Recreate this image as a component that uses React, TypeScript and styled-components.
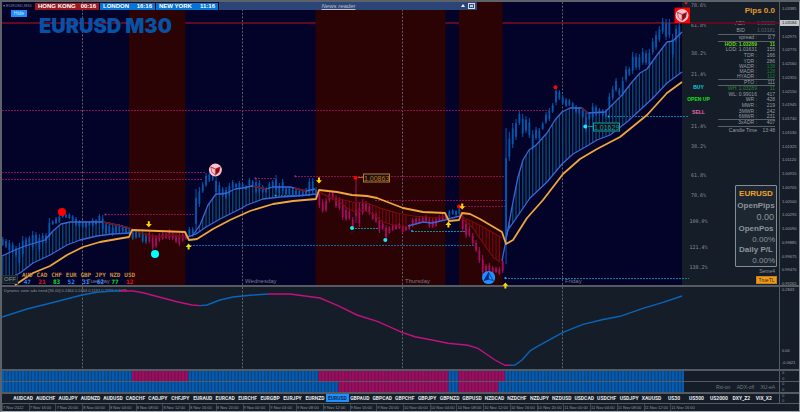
import React from "react";
import styled, { createGlobalStyle } from "styled-components";

const BLUE = "#0559ac";
const MAGENTA = "#a30d62";
const ORANGE = "#f0a63c";
const SANS = '"Liberation Sans", Arial, sans-serif';
const MONO = '"DejaVu Sans Mono", monospace';

const Global = createGlobalStyle`
  * { box-sizing: border-box; }
  body { margin: 0; background: #151e28; font-family: ${SANS}; }
  button { font-family: inherit; cursor: pointer; margin: 0; }
`;

/* ---------- chart data ---------- */

type Pt = [number, number];
const STEP = 10 / 3;
const barX = (i: number) => 2.7 + i * STEP;

/* Monday to the close of Thursday: high and low of each bar */
const early: Pt[] = [
  [237, 246], [239, 248], [240, 252], [242, 253], [246, 257], [243, 266], [236, 257], [237, 248], [236, 246], [231, 250],
  [232, 245], [234, 252], [233, 244], [233, 243], [218, 240], [220, 225], [217, 224], [215, 223], [210, 218], [214, 218],
  [213, 219], [215, 222], [217, 226], [220, 227], [220, 228], [221, 228], [221, 226], [218, 227], [219, 225], [214, 223],
  [215, 232], [222, 235], [223, 234], [225, 236], [225, 233], [224, 233], [225, 232], [226, 233], [227, 235], [230, 240],
  [229, 239], [230, 238], [230, 243], [233, 244], [230, 243], [234, 250], [235, 248], [233, 242], [232, 240], [233, 239],
  [229, 240], [231, 240], [233, 243], [233, 246], [232, 242], [232, 240], [227, 237], [227, 237], [189, 230], [187, 207],
  [182, 193], [173, 187], [172, 182], [171, 181], [177, 195], [182, 195], [187, 197], [187, 199], [183, 197], [180, 190],
  [183, 188], [181, 190], [183, 188], [185, 190], [178, 187], [180, 187], [179, 193], [180, 193], [185, 193], [187, 193],
  [182, 190], [180, 188], [175, 193], [183, 195], [179, 193], [187, 195], [187, 195], [188, 196], [189, 197], [189, 197],
  [190, 197], [188, 195], [178, 195], [178, 193], [187, 198], [190, 208], [199, 213], [198, 212], [192, 202], [190, 200],
  [195, 208], [197, 210], [200, 220], [207, 221], [209, 220], [217, 227], [178, 223], [203, 227], [199, 215], [201, 212],
  [204, 215], [212, 220], [213, 223], [217, 233], [222, 230], [225, 239], [226, 234], [224, 231], [224, 230], [223, 229],
  [225, 233], [226, 231], [224, 230], [218, 227], [217, 225], [217, 224], [216, 223], [215, 222], [217, 228], [218, 228],
  [217, 227], [215, 222], [214, 221], [215, 220], [210, 218], [209, 215], [210, 216], [207, 215], [212, 232], [220, 238],
  [226, 237], [233, 245], [240, 252], [247, 263], [255, 275], [264, 273], [263, 273], [266, 274], [267, 273], [267, 275],
  [258, 273],
];
const late: Pt[] = [
  [128, 264], [132, 161], [123, 148], [119, 140], [111, 125], [114, 137], [116, 133], [118, 138], [130, 150], [127, 140],
  [128, 140], [122, 130], [112, 124], [108, 121], [103, 113], [87, 105], [90, 100], [95, 105], [98, 107], [99, 106],
  [102, 108], [105, 113], [107, 115], [108, 118], [113, 132], [112, 120], [103, 120], [105, 116], [108, 115], [109, 116],
  [109, 118], [93, 109], [86, 100], [78, 92], [88, 96], [77, 96], [66, 82], [67, 76], [52, 74], [53, 70],
  [54, 70], [48, 65], [50, 65], [49, 67], [38, 55], [31, 50], [26, 42], [18, 34], [19, 40], [19, 38],
  [34, 58], [25, 42], [22, 38],
];
const bars: Pt[] = [...early, ...late];
const isDown = (i: number) => (i >= 44 && i < 56) || (i >= 95 && i < 134) || (i >= 138 && i < 151);

const ribbons: { upper: Pt[]; lower: Pt[]; down?: boolean }[] = [
  {
    upper: [[2, 256], [15, 250], [25, 246], [35, 243], [45, 240], [53, 231], [61, 224], [70, 222], [83, 222], [103, 222], [117, 225], [129, 228]],
    lower: [[2, 282], [20, 273], [33, 263], [50, 255], [67, 245], [80, 240], [97, 236], [112, 234], [130, 233]],
  },
  {
    upper: [[188, 237], [193, 235], [200, 225], [208, 205], [216, 194], [221, 194], [227, 193], [235, 189], [243, 188], [252, 186], [266, 189], [273, 187], [290, 187], [306, 191], [315, 189]],
    lower: [[188, 237], [196, 234], [206, 227], [220, 219], [240, 209], [247, 205], [263, 199], [280, 197], [297, 196], [316, 194]],
  },
  {
    upper: [[319, 192], [327, 196], [340, 199], [352, 202], [367, 203], [380, 208], [397, 213], [413, 216], [437, 218], [445, 216]],
    lower: [[319, 192], [330, 198], [340, 202], [347, 208], [355, 212], [363, 210], [373, 214], [383, 222], [393, 225], [407, 227]],
    down: true,
  },
  {
    upper: [[462, 217], [473, 222], [483, 227], [502, 238]],
    lower: [[462, 218], [473, 228], [483, 243], [493, 257], [500, 262]],
    down: true,
  },
  {
    upper: [[502, 261], [506, 240], [512, 207], [518, 177], [523, 160], [529, 150], [535, 146], [538, 143], [547, 133], [555, 120], [562, 112], [570, 108], [582, 108], [588, 113], [605, 112], [612, 105], [622, 95], [632, 82], [640, 73], [647, 69], [657, 55], [667, 42], [673, 41], [682, 32]],
    lower: [[506, 237], [508, 230], [517, 217], [530, 198], [547, 182], [562, 164], [573, 154], [587, 146], [597, 140], [610, 135], [627, 122], [640, 110], [653, 98], [667, 83], [682, 72]],
  },
];
const redBits: Pt[][] = [
  [[103, 222], [117, 225], [130, 228], [143, 234], [157, 237], [173, 235], [185, 237]],
  [[253, 186], [266, 189]],
  [[294, 188], [306, 191]],
  [[582, 108], [588, 113]],
];
const blueBits: Pt[][] = [
  [[408, 226], [423, 222], [432, 223], [445, 220], [452, 218], [460, 216]],
];
const slowLine: Pt[] = [
  [15, 285], [33, 273], [50, 266], [67, 255], [83, 247], [100, 242], [117, 239], [129, 237], [132, 230], [185, 232], [189, 240], [197, 239],
  [213, 229], [230, 220], [250, 211], [273, 204], [293, 201], [316, 199], [319, 190], [337, 192], [352, 195], [367, 196], [377, 198], [390, 203],
  [403, 208], [423, 212], [445, 213], [449, 221], [459, 220], [462, 213], [470, 214], [480, 219], [502, 232], [506, 244], [513, 240], [527, 218],
  [543, 200], [563, 174], [580, 159], [597, 149], [620, 137], [647, 115], [667, 93], [682, 82],
];

const line = (p: Pt[]) => p.map((q) => q.join(",")).join(" ");
const valueAt = (p: Pt[], x: number): number | null => {
  for (let i = 1; i < p.length; i++) {
    const [ax, ay] = p[i - 1];
    const [bx, by] = p[i];
    if (x >= ax && x <= bx) return ay + ((by - ay) * (x - ax)) / (bx - ax);
  }
  return null;
};

/* x1, x2, y, colour */
const levels: [number, number, number, string][] = [
  [2, 550, 110.5, "#8c0f55"], [2, 205, 172.5, "#8c0f55"], [2, 202, 179.5, "#8c0f55"], [105, 195, 214.5, "#8c0f55"],
  [255, 275, 178.5, "#8c0f55"], [295, 505, 176.5, "#8c0f55"], [375, 505, 200.5, "#8c0f55"], [462, 505, 206.5, "#8c0f55"],
  [190, 475, 245.5, "#116a9c"], [275, 310, 195.5, "#116a9c"], [352, 380, 228.5, "#118a9c"], [412, 467, 231.5, "#118a9c"],
  [608, 689, 116.5, "#0c7fa6"], [505, 689, 278.5, "#0c7fa6"],
];
const dots: [number, number, number, string][] = [
  [62, 212, 4, "#ff0000"], [155, 254, 4, "#00ffff"], [355.5, 177.7, 2, "#ff0000"], [352, 228, 2, "#22e6f5"],
  [385.3, 240, 2, "#22e6f5"], [555.5, 87.2, 2, "#ff0000"], [585.3, 126.4, 2, "#22e6f5"], [459, 206.4, 2, "#ff0000"],
  [105.4, 214.4, 1, "#b0208a"], [255.4, 178.3, 1, "#b0208a"], [295.4, 176.3, 1, "#b0208a"], [275.5, 195.6, 1, "#00b4d8"],
  [412, 231, 1, "#00b4d8"], [608.6, 116.5, 1, "#00c8e8"], [505.4, 278, 1, "#00c8e8"],
];
const arrows: [number, number, boolean][] = [
  [148.8, 224.3, true], [188.6, 246.6, false], [319, 180.6, true], [448.4, 224.6, false], [462.2, 206.6, true], [505.4, 285.4, false],
];
const days: [string, number][] = [["Tuesday", 87], ["Wednesday", 245], ["Thursday", 405], ["Friday", 565]];
const dayLines = [82.5, 242.5, 402.5, 562.5];

function Cube({ x, y, bg, fg, dark }: { x: number; y: number; bg: string; fg: string; dark: string }) {
  return (
    <g transform={`translate(${x} ${y})`}>
      <circle r="6.5" fill={bg} />
      <path d="M-4.6-3 0-1 4.6-3 3.6 2 0 5-3.6 2z" fill="none" stroke={fg} strokeWidth="0.7" />
      <path d="M0-1 4.6-3 3.6 2 0 5z" fill={dark} />
      <path d="M-4.6-3 0-1V5" fill="none" stroke={fg} strokeWidth="0.7" />
    </g>
  );
}

function PriceChart() {
  return (
    <ChartSvg viewBox="2 2 680 283" preserveAspectRatio="none" aria-label="EURUSD M30 price chart">
      {[[129, 56.5], [315.5, 130], [459, 43.5]].map(([x, w]) => (
        <rect key={x} x={x} y="2" width={w} height="283" fill="#2b0304" />
      ))}
      {dayLines.map((x) => (
        <line key={x} x1={x} x2={x} y1="2" y2="285" stroke="#5c6068" strokeWidth="1" strokeDasharray="2 1.6" />
      ))}
      {levels.map(([a, b, y, c], i) => (
        <line key={i} x1={a} x2={b} y1={y} y2={y} stroke={c} strokeWidth="1" strokeDasharray="2 1" />
      ))}
      {ribbons.map((r, k) =>
        bars.map((_, i) => {
          const x = barX(i);
          const a = valueAt(r.upper, x);
          const b = valueAt(r.lower, x);
          if (a === null || b === null || b - a < 1) return null;
          return <line key={`${k}-${i}`} x1={x} x2={x} y1={a} y2={b} stroke={r.down ? "#780612" : "#075078"} strokeWidth="1.2" />;
        })
      )}
      {bars.map(([h, l], i) => {
        const x = barX(i);
        const c = isDown(i) ? MAGENTA : BLUE;
        const pad = i === 106 ? 32 : (l - h) * 0.22;
        return (
          <g key={i} stroke={c}>
            <line x1={x} x2={x} y1={h} y2={l} strokeWidth="1" />
            <line x1={x} x2={x} y1={h + pad} y2={l - (l - h) * 0.15} strokeWidth="1.8" />
          </g>
        );
      })}
      {ribbons.map((r, k) => (
        <g key={k} fill="none" stroke={r.down ? "#7a0c10" : "#3d66d2"} strokeWidth={r.down ? 1.1 : 1.3} strokeLinejoin="round">
          <polyline points={line(r.upper)} />
          <polyline points={line(r.lower)} />
        </g>
      ))}
      {redBits.map((p, k) => <polyline key={k} points={line(p)} fill="none" stroke="#7a0c10" strokeWidth="1.3" />)}
      {blueBits.map((p, k) => <polyline key={k} points={line(p)} fill="none" stroke="#3d66d2" strokeWidth="1.3" />)}
      <polyline points={line(slowLine)} fill="none" stroke={ORANGE} strokeWidth="1.8" strokeLinejoin="round" />
      <path d="M358 177.5H363" stroke="#a0641e" strokeWidth="1" />
      <path d="M588 126.5H593" stroke="#0b8f9c" strokeWidth="1" />
      {dots.map(([x, y, r, c], i) => <circle key={i} cx={x} cy={y} r={r} fill={c} />)}
      {arrows.map(([x, y, down], i) => (
        <path key={i} transform={`translate(${x} ${y}) scale(1 ${down ? -1 : 1})`} d="M0-3 3 0.4H1V3H-1V0.4H-3z" fill="#ffd800" />
      ))}
      <Cube x={215.4} y={170} bg="#ffc0cb" fg="#a0404a" dark="#8b0a14" />
      <g transform="translate(488.6 277.5)">
        <circle r="6.6" fill="#1e90ff" />
        <path d="M0-5 4.6 3 0 1.8-4.6 3z" fill="none" stroke="#0a2f78" strokeWidth="0.8" />
        <path d="M0-5V1.8L-4.6 3z" fill="#0a1f90" />
        <path d="M0-5V1.8" stroke="#0a2f78" strokeWidth="0.8" />
      </g>
      <rect x="674.6" y="7.6" width="15.4" height="15.4" fill="#ff0000" />
      <Cube x={682} y={15.4} bg="#ffc0cb" fg="#a0404a" dark="#8b0a14" />
      <path d="M684 2.4H688L686 4.6z" fill="#ff1c3c" />
    </ChartSvg>
  );
}

const adx: { c: string; p: Pt[] }[] = [
  { c: "#0a64bc", p: [[2, 317], [27, 309], [55, 302], [82, 295], [97, 292.3], [113, 291], [120, 290.7]] },
  { c: "#c2107e", p: [[120, 290.7], [133, 291], [143, 292.7], [160, 297.3], [177, 301.7], [192, 305], [200, 305.6]] },
  { c: "#0a64bc", p: [[200, 305.6], [207, 305], [220, 300], [233, 297], [250, 295.3], [268, 294]] },
  { c: "#c2107e", p: [[268, 294], [290, 294], [320, 298], [338, 305.7], [357, 315], [378, 321.7], [402, 332.3], [415, 336.7], [432, 340], [448, 343.3], [468, 345.3], [478, 348.3], [495, 360], [505, 365.3], [510, 365.3]] },
  { c: "#0a64bc", p: [[510, 365.3], [515, 365], [522, 360], [530, 351], [537, 346.7], [563, 332.3], [583, 324.3], [602, 319.7], [620, 316.3], [643, 308.3], [663, 302.3], [682, 296]] },
];

function Histogram({ cuts, label }: { cuts: number[]; label: string }) {
  return (
    <StripSvg viewBox="2 0 682 10" preserveAspectRatio="none" aria-label={label}>
      {Array.from({ length: 205 }, (_, i) => {
        const x = 2 + i * STEP;
        const down = cuts.filter((c) => x + 1.6 > c).length % 2 === 1;
        return (
          <g key={i}>
            <rect x={x} y="0" width={STEP} height="10" fill={down ? "#7c1150" : "#08457f"} />
            <rect x={x} y="0" width="2.2" height="10" fill={down ? "#9c0d62" : "#055ab2"} />
          </g>
        );
      })}
    </StripSvg>
  );
}

/* ---------- styled parts ---------- */

const Terminal = styled.main`
  min-height: 100vh;
  display: flex;
  flex-direction: column;
  background: #151e28;
  border: solid #5d6268;
  border-width: 2px 1px 1px 2px;
  border-right-color: #8e959c;
  border-bottom-color: #a5acb3;
  overflow: hidden;
`;
const Pane = styled.section<{ $grow?: boolean; $h: number; $rule?: number }>`
  display: grid;
  grid-template-columns: minmax(0, 1fr) 19px;
  flex: ${(p) => (p.$grow ? "1 0 auto" : "0 0 auto")};
  min-height: ${(p) => p.$h}px;
  border-bottom: ${(p) => p.$rule ?? 0}px solid #565b61;
`;
const Stage = styled.div<{ $side: number }>`
  position: relative;
  display: grid;
  grid-template-columns: minmax(0, 1fr) ${(p) => p.$side}px;
  border-right: 1px solid #565b61;
`;
const Plot = styled.div<{ $navy?: boolean }>`
  position: relative;
  background: ${(p) => (p.$navy ? "#03032a" : "transparent")};
`;
const ChartSvg = styled.svg`
  position: absolute;
  inset: 0;
  width: 100%;
  height: 100%;
  overflow: visible;
  z-index: 1;
`;
const StripSvg = styled.svg`
  display: block;
  width: 100%;
  height: 100%;
`;
const PriceLine = styled.div`
  position: absolute;
  left: 0;
  right: 0;
  top: 7%;
  height: 2px;
  background: #600a22;
`;
const OnPlot = styled.span<{ $x: number; $y: number; $c: string; $size?: number; $framed?: boolean }>`
  position: absolute;
  z-index: 2;
  left: ${(p) => ((p.$x - 2) / 680) * 100}%;
  top: ${(p) => ((p.$y - 2) / 283) * 100}%;
  transform: translateY(-50%);
  white-space: nowrap;
  color: ${(p) => p.$c};
  font-size: ${(p) => p.$size ?? 6}px;
  line-height: ${(p) => (p.$framed ? 7 : 8)}px;
  border: ${(p) => (p.$framed ? `1px solid ${p.$c}` : "0")};
  background: ${(p) => (p.$framed ? "#141018" : "transparent")};
`;
const Overlay = styled.div`
  position: absolute;
  z-index: 3;
  inset: 0 97px 0 0;
  display: flex;
  flex-direction: column;
  align-items: flex-start;
`;
const TopBar = styled.header`
  display: flex;
  gap: 1px;
  height: 8px;
  width: 475px;
  max-width: 100%;
`;
const ChartName = styled.span`
  width: 32px;
  padding: 0 0 0 1px;
  font-size: 4px;
  line-height: 7px;
  color: #7f8590;
  white-space: nowrap;
  display: flex;
  gap: 1px;
`;
const Clock = styled.span<{ $closed?: boolean; $w: number }>`
  width: ${(p) => p.$w}px;
  margin-top: 1px;
  padding: 0 3px;
  display: flex;
  justify-content: space-between;
  background: ${(p) => (p.$closed ? "#9b1a22" : "#0574d4")};
  color: #fff;
  font-size: 6px;
  font-weight: 900;
  line-height: 7px;
  white-space: nowrap;
`;
const News = styled.div`
  flex: 1;
  display: flex;
  align-items: center;
  gap: 3px;
  padding-right: 2px;
  background: #2c4577;
`;
const NewsLink = styled.a`
  flex: 1;
  text-align: center;
  color: #b9bfcc;
  font-size: 6px;
  line-height: 8px;
  font-style: italic;
`;
const HideButton = styled.button`
  margin: 0 0 0 9px;
  width: 16px;
  height: 7px;
  padding: 0;
  border: 0;
  background: #1e8cfa;
  color: #cfe5ff;
  font-size: 5px;
  line-height: 7px;
`;
const Title = styled.h1`
  margin: 0 0 0 37px;
  font-family: Inter, ${SANS};
  font-weight: 900;
  font-size: 20px;
  line-height: 18px;
  color: #0752a6;
  white-space: nowrap;
`;
const BottomBar = styled.div`
  margin-top: auto;
  display: flex;
  align-items: flex-end;
  gap: 2px;
`;
const OffButton = styled.button`
  width: 16px;
  height: 9px;
  padding: 0;
  margin-bottom: 1px;
  border: 1px solid #26333f;
  background: #151f29;
  color: #8c939a;
  font-size: 6px;
  line-height: 7px;
`;
const Strength = styled.table`
  border-collapse: collapse;
  table-layout: fixed;
  width: 117px;
  font-family: ${MONO};
  font-size: 6px;
  font-weight: 700;
  text-align: center;
`;
const StrengthHead = styled.th`
  padding: 0;
  height: 7px;
  line-height: 7px;
  color: #c98c3c;
`;
const StrengthCell = styled.td<{ $c: string }>`
  padding: 0;
  height: 7px;
  line-height: 7px;
  color: ${(p) => p.$c};
`;
const Side = styled.aside`
  position: relative;
  display: flex;
  flex-direction: column;
  align-items: flex-end;
  padding: 4px 2px 1px 0;
`;
const Level = styled.span<{ $y: number; $c?: string }>`
  position: absolute;
  left: 0;
  width: 33px;
  top: ${(p) => ((p.$y - 2) / 283) * 100}%;
  transform: translateY(-50%);
  text-align: center;
  font-family: ${(p) => (p.$c ? SANS : MONO)};
  font-weight: ${(p) => (p.$c ? 700 : 400)};
  font-size: 5px;
  line-height: 6px;
  color: ${(p) => p.$c ?? "#8a8f95"};
  white-space: nowrap;
`;
const Pips = styled.strong`
  color: #e89a30;
  font-size: 8px;
  line-height: 10px;
  padding: 0 2px;
`;
const Stats = styled.table`
  border-collapse: collapse;
  width: 57px;
  margin: 4px 2px 0 0;
  font-size: 5px;
  text-align: right;
`;
const StatRow = styled.tr<{ $h: number; $c?: string; $bold?: boolean; $line?: boolean }>`
  height: ${(p) => p.$h}px;
  line-height: 5px;
  color: ${(p) => p.$c ?? "#989da2"};
  font-weight: ${(p) => (p.$bold ? 700 : 400)};
  border-top: ${(p) => (p.$line ? "1px solid #5a6067" : "0")};
`;
const StatName = styled.th<{ $gap?: boolean }>`
  padding: 0 ${(p) => (p.$gap ? 12 : 0)}px 0 0;
  font-weight: inherit;
  white-space: nowrap;
  text-align: right;
`;
const StatValue = styled.td<{ $c?: string }>`
  width: 17px;
  padding: 0;
  white-space: nowrap;
  text-align: right;
  color: ${(p) => p.$c ?? "inherit"};
`;
const PositionBox = styled.div`
  margin-top: auto;
  width: 42px;
  padding: 1px 1px 0;
  border: 1px solid #868d94;
  border-radius: 1px;
  background: #1c2731;
  display: flex;
  flex-direction: column;
  align-items: flex-end;
  color: #8e949a;
`;
const PairName = styled.strong`
  align-self: center;
  font-size: 8px;
  line-height: 14px;
  color: #f5a02a;
`;
const BoxLabel = styled.span`
  align-self: center;
  font-size: 8px;
  line-height: 10px;
  font-weight: 700;
  white-space: nowrap;
`;
const BoxValue = styled.span<{ $big?: boolean }>`
  font-size: ${(p) => (p.$big ? 9 : 8)}px;
  line-height: ${(p) => (p.$big ? 13 : 11)}px;
  padding-right: ${(p) => (p.$big ? 1 : 0)}px;
`;
const Note = styled.span`
  font-size: 5px;
  line-height: 6px;
  margin: 1px 2px 2px 0;
  color: #8a8f95;
`;
const TrueButton = styled.button`
  width: 21px;
  height: 8px;
  padding: 0;
  border: 1px solid #c87f16;
  background: #f09a1c;
  color: #3c2a10;
  font-size: 5px;
  line-height: 6px;
`;
const Axis = styled.div<{ $spread?: boolean }>`
  display: flex;
  flex-direction: column;
  justify-content: space-between;
  padding: ${(p) => (p.$spread ? "4px 0 0 0" : "0")};
  margin-bottom: ${(p) => (p.$spread ? "-2px" : "0")};
  min-width: 0;
`;
const Tick = styled.span<{ $now?: boolean }>`
  display: block;
  height: 6px;
  padding-left: 2px;
  font-size: 4px;
  line-height: 6px;
  white-space: nowrap;
  color: ${(p) => (p.$now ? "#10151a" : "#a0a5aa")};
  background: ${(p) => (p.$now ? "#c4c7ca" : "transparent")};
`;
const AdxAxis = styled.div`
  display: grid;
  grid-template-rows: 1fr 12px 9px;
`;
const Zero = styled.span`
  padding-left: 2px;
  font-size: 4px;
  line-height: 4px;
  color: #8a8f95;
`;
const StripLabels = styled.div`
  position: absolute;
  right: 0;
  top: 0;
  width: 67px;
  height: 100%;
  display: grid;
  grid-template-columns: repeat(3, 1fr);
  align-items: center;
  text-align: center;
  font-size: 5px;
  line-height: 9px;
  color: #737980;
`;
const IndicatorName = styled.span`
  position: absolute;
  left: 2px;
  top: 0;
  font-size: 4px;
  line-height: 7px;
  color: #8c9197;
  white-space: nowrap;
`;
const Symbols = styled.nav`
  display: grid;
  grid-template-columns: repeat(34, minmax(0, 1fr));
  padding: 0 4px 0 10px;
  border-right: 1px solid #565b61;
`;
const SymbolButton = styled.button<{ $on?: boolean }>`
  height: 8px;
  margin: 0;
  padding: 0;
  border: 0;
  background: ${(p) => (p.$on ? "#1e90ff" : "transparent")};
  color: ${(p) => (p.$on ? "#0b2c5c" : "#e4e6e8")};
  font-family: Roboto, ${SANS};
  font-size: 5px;
  font-weight: 700;
  line-height: 8px;
  white-space: nowrap;
`;
const Times = styled.div`
  display: grid;
  grid-template-columns: repeat(26, minmax(0, 1fr));
  margin-right: 102px;
  font-size: 4px;
  line-height: 7px;
  color: #92979c;
  white-space: nowrap;
`;
const Stamp = styled.time`
  border-left: 1px solid #3c444c;
  height: 7px;
`;

/* ---------- content ---------- */

const prices = [
  "1.03385", "1.03184", "1.02975", "1.02770", "1.02560", "1.02355", "1.02150", "1.01945", "1.01740", "1.01530", "1.01325",
  "1.01120", "1.00915", "1.00705", "1.00500", "1.00295", "1.00090", "0.99885", "0.99675", "0.99470", "0.99265",
];
const fib: [string, number, string?][] = [
  ["78.6%", 5], ["61.8%", 25], ["38.2%", 53], ["21.4%", 74], ["BUY", 87, "#10cfe0"], ["OPEN UP", 99, "#10e020"],
  ["SELL", 112, "#e468ac"], ["21.4%", 126], ["38.2%", 146], ["61.8%", 175], ["78.6%", 195], ["100.0%", 221],
  ["121.4%", 247], ["138.2%", 267],
];
type Stat = { k: string; v: string; h: number; c?: string; vc?: string; bold?: boolean; line?: boolean; gap?: boolean };
const stats: Stat[] = [
  { k: "ASK", v: "1.03188", h: 7, vc: "#5a6067", gap: true },
  { k: "BID", v: "1.03181", h: 7, vc: "#5a6067", gap: true },
  { k: "spread :", v: "0.7", h: 7, line: true },
  { k: "HOD: 1.03289", v: "11", h: 6, c: "#62d818", bold: true, line: true },
  { k: "LOD: 1.01631", v: "155", h: 5 },
  { k: "TDR :", v: "166", h: 6 },
  { k: "YDR :", v: "286", h: 6 },
  { k: "WADR :", v: "138", h: 5, vc: "#1f7a30" },
  { k: "MADR :", v: "128", h: 5, vc: "#1f7a30" },
  { k: "HYADR :", v: "112", h: 5, vc: "#1f7a30" },
  { k: "PTO :", v: "111", h: 6, line: true },
  { k: "WH: 1.03289", v: "11", h: 6, c: "#2f7f38", line: true },
  { k: "WL: 0.99016", v: "417", h: 5 },
  { k: "WR :", v: "428", h: 6 },
  { k: "MWR :", v: "219", h: 6 },
  { k: "3MWR :", v: "242", h: 5 },
  { k: "6MWR :", v: "231", h: 5 },
  { k: "3xADR :", v: "407", h: 7, line: true },
  { k: "Candle Time", v: "13:48", h: 8, line: true },
];
const strength: [string, string, string][] = [
  ["AUD", "47", "#2c8cf0"], ["CAD", "21", "#f01414"], ["CHF", "83", "#0ee61e"], ["EUR", "52", "#2c8cf0"],
  ["GBP", "31", "#2c8cf0"], ["JPY", "62", "#2c8cf0"], ["NZD", "77", "#0ee61e"], ["USD", "12", "#f01414"],
];
const symbols =
  "AUDCAD AUDCHF AUDJPY AUDNZD AUDUSD CADCHF CADJPY CHFJPY EURAUD EURCAD EURCHF EURGBP EURJPY EURNZD EURUSD GBPAUD GBPCAD GBPCHF GBPJPY GBPNZD GBPUSD NZDCAD NZDCHF NZDJPY NZDUSD USDCAD USDCHF USDJPY XAUUSD US30 US500 US2000 DXY_Z2 VIX_X2".split(" ");
const hours = ["00:00", "04:00", "08:00", "12:00", "16:00", "20:00"];
const times = [
  "7 Nov 2022", "7 Nov 16:00", "7 Nov 20:00",
  ...[8, 9, 10, 11].flatMap((d) => hours.map((h) => `${d} Nov ${h}`)),
].slice(0, 26);

export default function App() {
  return (
    <Terminal>
      <Global />
      <Pane $grow $h={285} $rule={2}>
        <Stage $side={97}>
          <Plot $navy>
            <PriceChart />
            {days.map(([d, x]) => <OnPlot key={d} $x={x} $y={281} $c="#777b84">{d}</OnPlot>)}
            <OnPlot $x={363} $y={178} $c="#c47a1c" $size={7} $framed>1.00863</OnPlot>
            <OnPlot $x={593} $y={127} $c="#0ba5ac" $size={7} $framed>1.01629</OnPlot>
          </Plot>
          <Side>
            {fib.map(([t, y, c], i) => <Level key={i} $y={y} $c={c}>{t}</Level>)}
            <Pips>Pips 0.0</Pips>
            <Stats>
              <tbody>
                {stats.map((s) => (
                  <StatRow key={s.k} $h={s.h} $line={s.line} $bold={s.bold} $c={s.c}>
                    <StatName scope="row" $gap={s.gap}>{s.k}</StatName>
                    <StatValue $c={s.vc}>{s.v}</StatValue>
                  </StatRow>
                ))}
              </tbody>
            </Stats>
            <PositionBox>
              <PairName>EURUSD</PairName>
              <BoxLabel>OpenPips</BoxLabel>
              <BoxValue $big>0.00</BoxValue>
              <BoxLabel>OpenPos</BoxLabel>
              <BoxValue>0.00%</BoxValue>
              <BoxLabel>Daily P/L</BoxLabel>
              <BoxValue>0.00%</BoxValue>
            </PositionBox>
            <Note>Seme4</Note>
            <TrueButton type="button">TrueTL</TrueButton>
          </Side>
          <PriceLine />
          <Overlay>
            <TopBar>
              <ChartName><span>▾</span>EURUSD,M30</ChartName>
              <Clock $closed $w={64}><span>HONG KONG</span><span>00:16</span></Clock>
              <Clock $w={55}><span>LONDON</span><span>16:16</span></Clock>
              <Clock $w={62}><span>NEW YORK</span><span>11:16</span></Clock>
              <News>
                <NewsLink href="#news">News reader</NewsLink>
                <svg width="4" height="4" viewBox="0 0 4 4"><path d="M2 0 4 3H0z" fill="#e8ecf4" /></svg>
                <svg width="7" height="6" viewBox="0 0 7 6">
                  <rect x="0.5" y="0.5" width="6" height="5" fill="none" stroke="#d4dbe8" />
                  <path d="M2 2 5 4M5 2 2 4" stroke="#e8ecf4" />
                </svg>
              </News>
            </TopBar>
            <HideButton type="button">Hide</HideButton>
            <Title>EURUSD M30</Title>
            <BottomBar>
              <OffButton type="button">OFF</OffButton>
              <Strength>
                <thead><tr>{strength.map(([n]) => <StrengthHead key={n}>{n}</StrengthHead>)}</tr></thead>
                <tbody><tr>{strength.map(([n, v, c]) => <StrengthCell key={n} $c={c}>{v}</StrengthCell>)}</tr></tbody>
              </Strength>
            </BottomBar>
          </Overlay>
        </Stage>
        <Axis $spread>
          {prices.map((p, i) => <Tick key={p} $now={i === 1}>{p}</Tick>)}
        </Axis>
      </Pane>

      <Pane $h={84} $rule={2}>
        <Stage $side={97}>
          <Plot>
            <ChartSvg viewBox="2 287 680 82" preserveAspectRatio="none" aria-label="Dynamic zone ADX trend">
              {dayLines.map((x) => (
                <line key={x} x1={x} x2={x} y1="287" y2="369" stroke="#5c6269" strokeWidth="1" strokeDasharray="2 1.6" />
              ))}
              {adx.map((s, i) => <polyline key={i} points={line(s.p)} fill="none" stroke={s.c} strokeWidth="1.4" />)}
            </ChartSvg>
            <IndicatorName>Dynamic zone adx trend [36.00] 0.2464 0.2464 0.1197 0.2226 0.1675</IndicatorName>
          </Plot>
        </Stage>
        <AdxAxis>
          <Tick>0.2843</Tick>
          <Tick>0.00</Tick>
          <Tick>-0.0621</Tick>
        </AdxAxis>
      </Pane>

      <Pane $h={11} $rule={1}>
        <Stage $side={95}>
          <Histogram label="Fast trend" cuts={[131, 187, 317, 447, 460, 504]} />
        </Stage>
        <Axis><Zero>0</Zero><Zero>0</Zero></Axis>
      </Pane>
      <Pane $h={11} $rule={2}>
        <Stage $side={95}>
          <Histogram label="Slow trend" cuts={[340, 447, 460, 500]} />
          <StripLabels><span>Rsi-on</span><span>ADX-off</span><span>XU-eA</span></StripLabels>
        </Stage>
        <Axis><Zero>0</Zero><Zero>0</Zero></Axis>
      </Pane>
      <Pane $h={10} $rule={1}>
        <Symbols>
          {symbols.map((s) => <SymbolButton type="button" key={s} $on={s === "EURUSD"}>{s}</SymbolButton>)}
        </Symbols>
        <Axis><Zero>0</Zero><Zero>0</Zero></Axis>
      </Pane>
      <Times>
        {times.map((t) => <Stamp key={t}>{t}</Stamp>)}
      </Times>
    </Terminal>
  );
}
